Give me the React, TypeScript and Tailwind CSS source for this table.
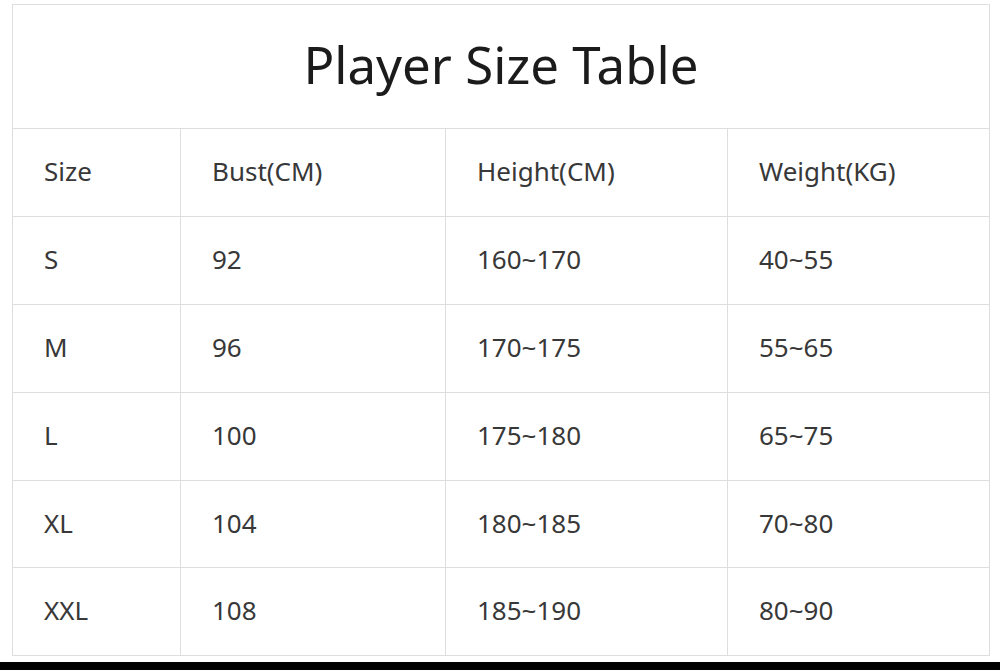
const rows = [
  ['Size', 'Bust(CM)', 'Height(CM)', 'Weight(KG)'],
  ['S', '92', '160~170', '40~55'],
  ['M', '96', '170~175', '55~65'],
  ['L', '100', '175~180', '65~75'],
  ['XL', '104', '180~185', '70~80'],
  ['XXL', '108', '185~190', '80~90'],
]

export default function App() {
  return (
    <div
      className="w-[1000px] h-[670px] bg-white flex flex-col overflow-hidden"
      style={{ fontFamily: '"Noto Sans", "Open Sans", sans-serif' }}
    >
      <div className="pt-[4px] pl-[12px]">
        <div className="w-[978px] border border-[#dedede]">
          <div className="h-[124px] flex items-center justify-center border-b border-[#dedede]">
            <h1 className="text-[51px] text-[#1b1b1b] leading-none pb-[4px]">Player Size Table</h1>
          </div>
          {rows.map((row, i) => (
            <div
              key={i}
              className={
                'grid grid-cols-[167px_265px_282px_262px] ' +
                (i >= 4 ? 'h-[87px] ' : 'h-[88px] ') +
                (i < rows.length - 1 ? 'border-b border-[#dedede]' : '')
              }
            >
              {row.map((cell, j) => (
                <div
                  key={j}
                  className={
                    'flex items-center pl-[31px] pb-[2px] text-[26px] text-[#383838] ' +
                    (j > 0 ? 'border-l border-[#dedede]' : '')
                  }
                >
                  {cell}
                </div>
              ))}
            </div>
          ))}
        </div>
      </div>
      <div className="mt-auto h-[8px] bg-black" />
    </div>
  )
}
